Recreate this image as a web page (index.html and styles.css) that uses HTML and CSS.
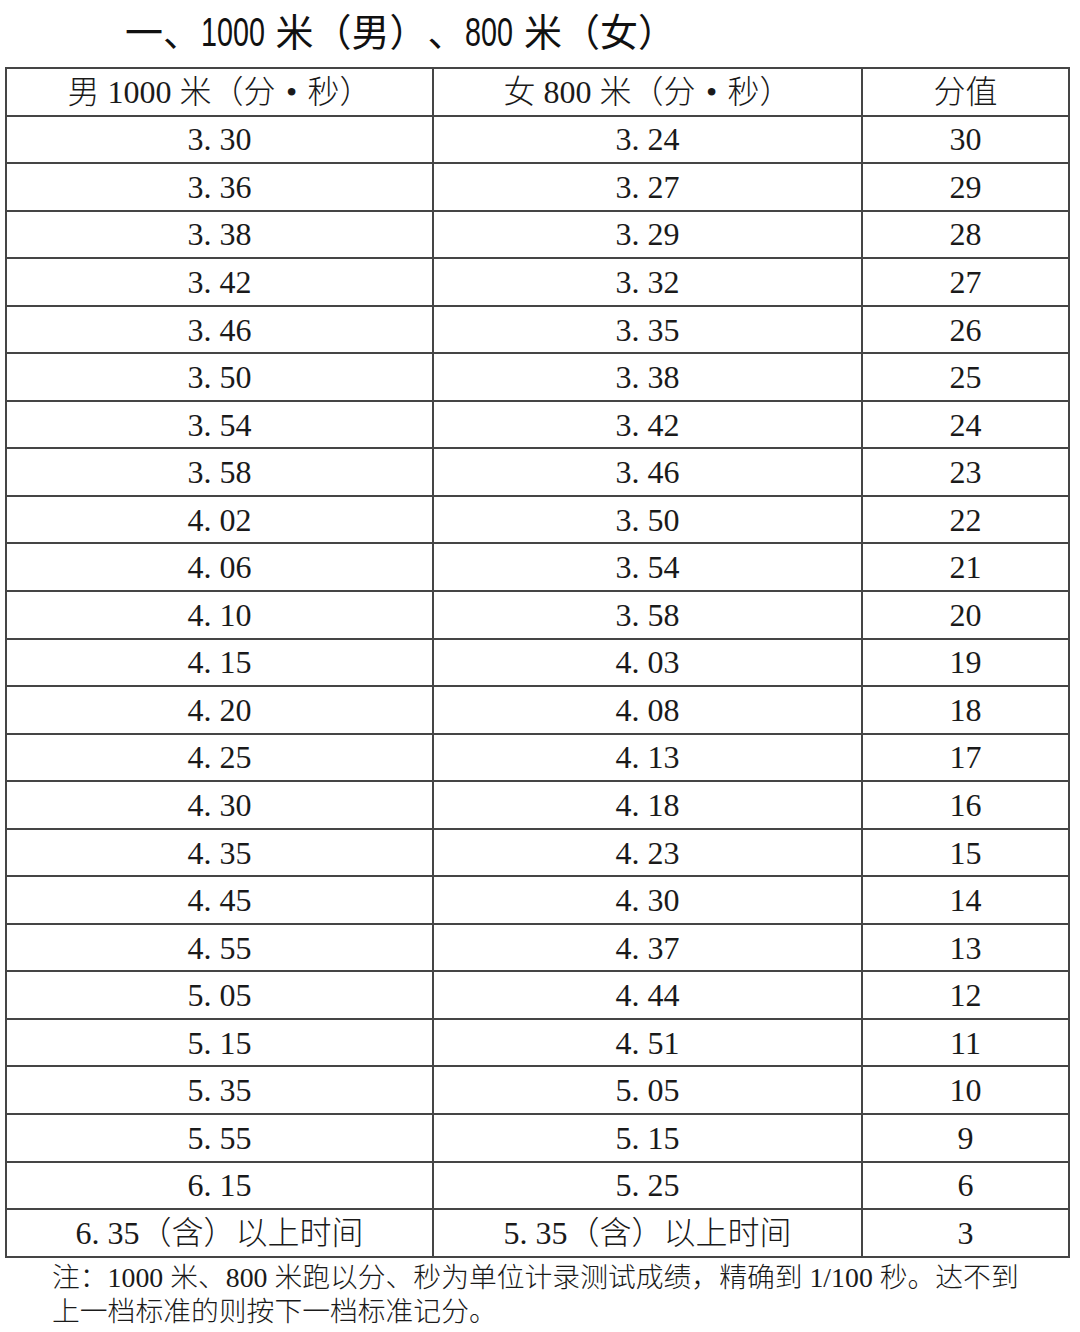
FILE: index.html
```html
<!DOCTYPE html>
<html lang="zh">
<head>
<meta charset="utf-8">
<title>1000米（男）、800米（女）</title>
<link rel="stylesheet" href="styles.css">
</head>
<body>
<div class="page">
  <h1 class="title">一、<span class="num n4">1000</span> 米（男）、<span class="num n3">800</span> 米（女）</h1>
  <table class="score">
    <colgroup>
      <col class="c1"><col class="c2"><col class="c3">
    </colgroup>
    <thead>
      <tr><th>男 1000 米（分<span class="dot">•</span>秒）</th><th>女 800 米（分<span class="dot">•</span>秒）</th><th>分值</th></tr>
    </thead>
    <tbody>
      <tr><td>3. 30</td><td>3. 24</td><td>30</td></tr>
      <tr><td>3. 36</td><td>3. 27</td><td>29</td></tr>
      <tr><td>3. 38</td><td>3. 29</td><td>28</td></tr>
      <tr><td>3. 42</td><td>3. 32</td><td>27</td></tr>
      <tr><td>3. 46</td><td>3. 35</td><td>26</td></tr>
      <tr><td>3. 50</td><td>3. 38</td><td>25</td></tr>
      <tr><td>3. 54</td><td>3. 42</td><td>24</td></tr>
      <tr><td>3. 58</td><td>3. 46</td><td>23</td></tr>
      <tr><td>4. 02</td><td>3. 50</td><td>22</td></tr>
      <tr><td>4. 06</td><td>3. 54</td><td>21</td></tr>
      <tr><td>4. 10</td><td>3. 58</td><td>20</td></tr>
      <tr><td>4. 15</td><td>4. 03</td><td>19</td></tr>
      <tr><td>4. 20</td><td>4. 08</td><td>18</td></tr>
      <tr><td>4. 25</td><td>4. 13</td><td>17</td></tr>
      <tr><td>4. 30</td><td>4. 18</td><td>16</td></tr>
      <tr><td>4. 35</td><td>4. 23</td><td>15</td></tr>
      <tr><td>4. 45</td><td>4. 30</td><td>14</td></tr>
      <tr><td>4. 55</td><td>4. 37</td><td>13</td></tr>
      <tr><td>5. 05</td><td>4. 44</td><td>12</td></tr>
      <tr><td>5. 15</td><td>4. 51</td><td>11</td></tr>
      <tr><td>5. 35</td><td>5. 05</td><td>10</td></tr>
      <tr><td>5. 55</td><td>5. 15</td><td>9</td></tr>
      <tr><td>6. 15</td><td>5. 25</td><td>6</td></tr>
      <tr><td>6. 35（含）以上时间</td><td>5. 35（含）以上时间</td><td>3</td></tr>
    </tbody>
  </table>
  <p class="note">注：1000 米、800 米跑以分、秒为单位计录测试成绩，精确到 1/100 秒。达不到<br>上一档标准的则按下一档标准记分。</p>
</div>
</body>
</html>
```

FILE: styles.css
```css
html, body {
  margin: 0;
  padding: 0;
  background: #ffffff;
}

.page {
  width: 1080px;
  height: 1332px;
  overflow: hidden;
  color: #1a1a1a;
  text-spacing-trim: space-all;
}

.title {
  margin: 0;
  padding: 11px 0 0 125px;
  height: 55px;
  box-sizing: border-box;
  font-family: "Liberation Sans", "Noto Sans CJK SC", sans-serif;
  font-size: 38px;
  font-weight: 400;
  line-height: 42px;
  color: #111;
  white-space: nowrap;
}

.num {
  display: inline-block;
  font-size: 41px;
  transform: scaleX(0.7);
  transform-origin: left center;
}

.n4 { margin-right: -27.4px; }
.n3 { margin-right: -20.5px; }

.score {
  margin-left: 5px;
  margin-top: 12px;
  width: 1063px;
  border-collapse: collapse;
  table-layout: fixed;
  font-family: "Liberation Serif", "Noto Sans CJK SC", serif;
  font-size: 32px;
  font-weight: 300;
  color: #1a1a1a;
}

.c1 { width: 427px; }
.c2 { width: 429px; }
.c3 { width: 207px; }

.score th,
.score td {
  border: 2px solid #454545;
  height: 47.56px;
  padding: 0;
  box-sizing: border-box;
  text-align: center;
  vertical-align: middle;
  font-weight: 300;
  line-height: 1;
}

.dot {
  display: inline-block;
  width: 1em;
  text-align: center;
}

.note {
  margin: 3px 0 0 52px;
  font-family: "Liberation Serif", "Noto Sans CJK SC", serif;
  font-size: 27.8px;
  font-weight: 300;
  line-height: 34px;
  color: #1a1a1a;
  white-space: nowrap;
}
```
